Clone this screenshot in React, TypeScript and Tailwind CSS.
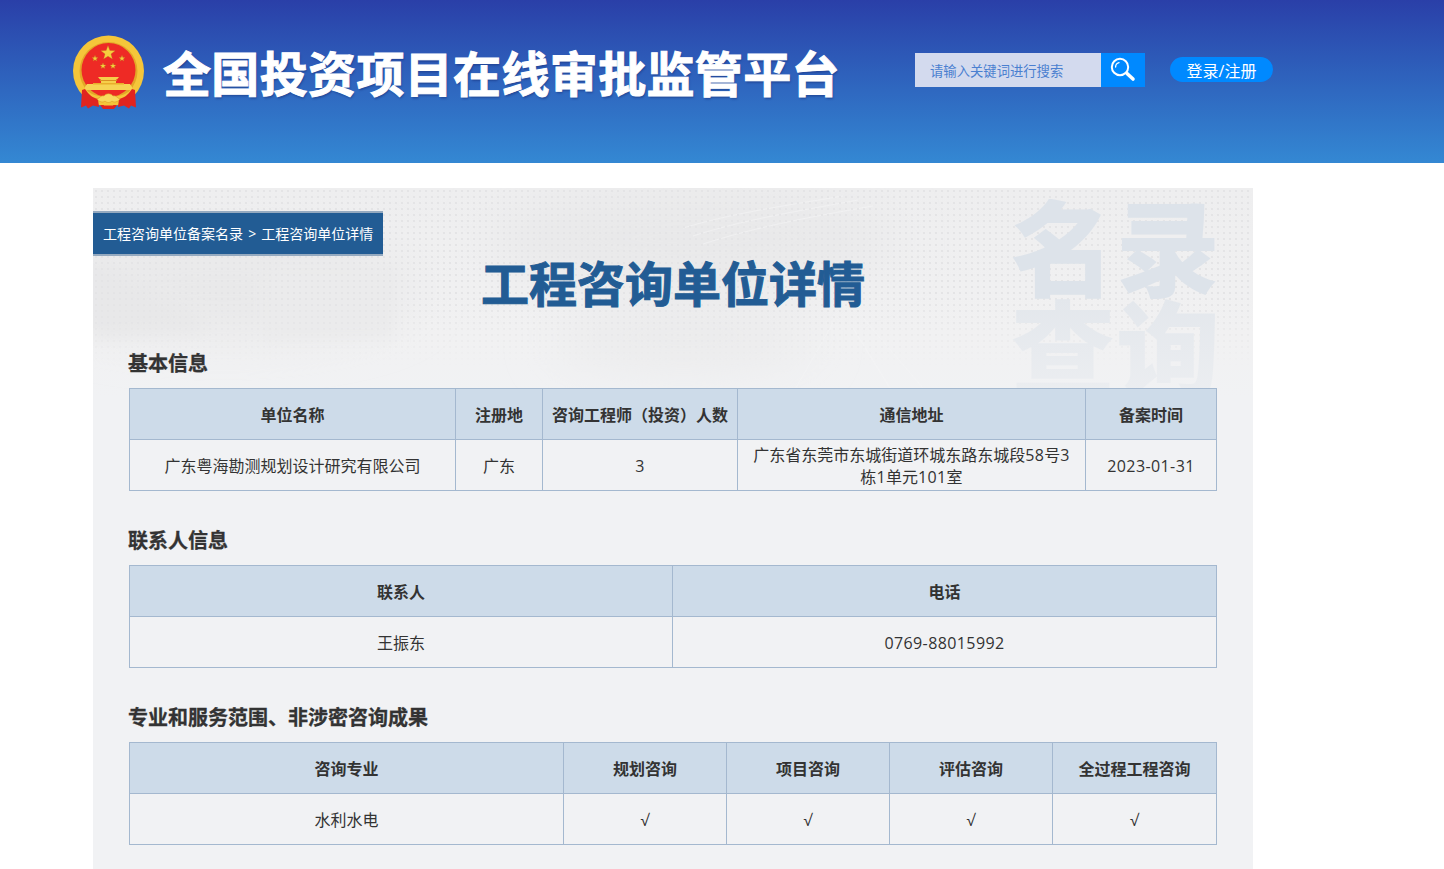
import React from 'react';

const FONT = 'font-["Open_Sans","Noto_Sans_CJK_SC",sans-serif]';

function Star({ x, y, r }: { x: number; y: number; r: number }) {
  const pts: string[] = [];
  for (let i = 0; i < 10; i++) {
    const a = -Math.PI / 2 + (i * Math.PI) / 5;
    const d = i % 2 === 0 ? r : r * 0.42;
    pts.push(`${x + d * Math.cos(a)},${y + d * Math.sin(a)}`);
  }
  return <polygon points={pts.join(' ')} fill="#f6cf3e" stroke="#b9781c" strokeWidth="0.3" />;
}

function Emblem() {
  return (
    <svg width="73" height="77" viewBox="0 0 73 77" className="shrink-0">
      {/* ring */}
      <circle cx="36.5" cy="37" r="35.5" fill="#f5c63a" />
      <circle cx="36.5" cy="37" r="29" fill="#e3a727" />
      <circle cx="36.5" cy="36" r="27" fill="#ee2a25" />
      <Star x={36} y={19} r={7.5} />
      <Star x={23} y={24.5} r={3.2} />
      <Star x={50} y={24.5} r={3.2} />
      <Star x={31} y={32} r={3.2} />
      <Star x={41} y={32} r={3.2} />
      {/* gate */}
      <path d="M26 43h21l-2 2.5h-1V49h-15v-3.500h-1z" fill="#f6cf4a" />
      <path d="M28 46h17v1H28z" fill="#d98f22" />
      <path d="M15 50h43l2 3v3H13v-3z" fill="#f6d354" />
      <path d="M21 49h31v1.500H21z" fill="#e9ad2a" />
      {/* ribbon and wheat at the bottom */}
      <path d="M12 55c6 5 14 8 24.500 8S55 60 61 55l2 4c-6 7-16 10-26.500 10S16 66 10 59z" fill="#f5c63a" />
      <path d="M10 56l3-1c4 6 8 9 13 10l1 8-6-1.500-5 3-2-3-5 2z" fill="#e1241f" />
      <path d="M63 56l-3-1c-4 6-8 9-13 10l-1 8 6-1.500 5 3 2-3 5 2z" fill="#e1241f" />
      <path d="M25 65c3-1 4-4 7-3 2-3 7-3 9 0 3-1 4 2 7 3-2 3-6 4-8 2-2 2-5 2-7 0-2 2-6 1-8-2z" fill="#f8d95e" stroke="#d99a22" strokeWidth="0.6" />
      <path d="M28 71h17l-3 4H31z" fill="#e1241f" />
      <path d="M30 69h13l-2 2.500h-9z" fill="#f5c63a" />
    </svg>
  );
}

function SearchIcon() {
  return (
    <svg width="26" height="26" viewBox="0 0 26 26" fill="none">
      <circle cx="10" cy="10" r="8.200" stroke="white" strokeWidth="2" />
      <path d="M5.600 10a4.500 4.500 0 0 1 3.400-4.300" stroke="white" strokeWidth="1.300" strokeLinecap="round" />
      <path d="M17 16.500l6 5.500" stroke="white" strokeWidth="3.600" strokeLinecap="round" />
    </svg>
  );
}

function PanelArt() {
  return (
    <svg width="1160" height="210" viewBox="0 0 1160 210" className="absolute left-0 top-0" fill="none">
      <defs>
        <filter id="soft" x="-20%" y="-20%" width="140%" height="140%">
          <feGaussianBlur stdDeviation="8" />
        </filter>
        <filter id="softer" x="-20%" y="-20%" width="140%" height="140%">
          <feGaussianBlur stdDeviation="24" />
        </filter>
      </defs>
      <g filter="url(#softer)">
        <ellipse cx="130" cy="100" rx="190" ry="50" fill="#e9e9ea" />
        <ellipse cx="600" cy="50" rx="200" ry="50" fill="#e9e9ea" />
        <ellipse cx="590" cy="150" rx="130" ry="30" fill="#ebebec" />
      </g>
      <g filter="url(#soft)">
        <path d="M0 70L120 140L0 150z" fill="#e8e8e9" />
        <path d="M170 80h130v70H170z" fill="#ebebec" />
      </g>
      <path d="M0 75L62 128L0 140z" fill="#e8e8e9" opacity="0.6" />
      <g stroke="#f5f5f6" strokeWidth="1" opacity="0.6">
        <path d="M590 40C640 25 690 18 750 8" />
        <path d="M600 48C650 32 700 24 765 12" />
        <path d="M610 56C660 40 710 30 780 18" />
        <path d="M770 130L830 200" />
        <path d="M760 140L800 205" />
        <path d="M700 205L740 135" />
      </g>
    </svg>
  );
}

function Header() {
  return (
    <header className="h-[163px] bg-gradient-to-b from-[#2a3fa8] to-[#3488d3] flex items-start">
      <div className="ml-[72px] mt-[34px] w-[73px]">
        <Emblem />
      </div>
      <h1 className="ml-[18px] mt-[40px] w-[680px] text-[48px] leading-[68px] font-bold tracking-[0.35px] text-white whitespace-nowrap [-webkit-text-stroke:1px_white] [text-shadow:1px_2px_2px_rgba(20,40,110,0.45)]">
        全国投资项目在线审批监管平台
      </h1>
      <div className="ml-[72px] mt-[53px] flex h-[34px] w-[230px]">
        <div className="w-[186px] bg-[#d3daee] pl-[15px] text-[13.33px] leading-[36px] text-[#4a7fd0]">请输入关键词进行搜索</div>
        <div className="w-[44px] bg-[#0089ff] flex items-center justify-center">
          <SearchIcon />
        </div>
      </div>
      <div className="ml-[25px] mt-[57px] w-[103px] h-[25px] rounded-full bg-[#0089ff] text-white text-[16px] leading-[28px] text-center">
        登录/注册
      </div>
    </header>
  );
}

function Breadcrumb() {
  return (
    <div className="relative inline-block h-[45px] w-[290px] bg-[#225c94] border-y-2 border-[#95aac0] pl-[10px] text-[14px] leading-[42px] text-white whitespace-nowrap">
      工程咨询单位备案名录 <span className="mx-[1.5px]">&gt;</span> 工程咨询单位详情
    </div>
  );
}

function Latin({ children }: { children: React.ReactNode }) {
  return <span className="tracking-[0.4px]">{children}</span>;
}

function Section({ title, widths, head, row }: { title: string; widths: number[]; head: string[]; row: React.ReactNode[] }) {
  return (
    <section className="relative">
      <h2 className="text-[20px] leading-[30px] font-bold text-[#333] mb-[9px] [-webkit-text-stroke:0.3px_#333]">{title}</h2>
      <table className="w-[1087px] ml-px table-fixed border-collapse text-[16px] text-[#333] text-center">
        <colgroup>
          {widths.map((w, i) => (
            <col key={i} style={{ width: w }} />
          ))}
        </colgroup>
        <thead>
          <tr className="h-[51px] bg-[#cddbe9]">
            {head.map((h) => (
              <th key={h} className="border border-[#a4b8cf] font-bold px-1 pt-[2px] whitespace-nowrap">{h}</th>
            ))}
          </tr>
        </thead>
        <tbody>
          <tr className="h-[51px]">
            {row.map((c, i) => (
              <td key={i} className="border border-[#a4b8cf] px-3 pt-[2px] leading-[22px]">{c}</td>
            ))}
          </tr>
        </tbody>
      </table>
    </section>
  );
}

export default function App() {
  return (
    <div className={`min-h-screen bg-white overflow-hidden ${FONT}`}>
      <Header />
      <main className="relative ml-[93px] mt-[25px] w-[1160px] bg-[#f1f2f4] pb-[40px] overflow-hidden">
        {/* background art at the top of the panel */}
        <div className="absolute inset-x-0 top-0 h-[210px] bg-[linear-gradient(180deg,#eeeeef_0%,#f1f1f2_70%,#f1f2f4_100%)]" />
        <PanelArt />
        <div className="absolute inset-x-0 top-0 h-[210px] bg-[radial-gradient(#e3e3e5_0.7px,transparent_0.9px)] bg-[length:6px_6px] [mask-image:linear-gradient(180deg,black_50%,transparent_85%)]" />
        <div className="absolute left-[918px] top-[11px] h-[189px] w-[220px] overflow-hidden text-[104px] leading-[100px] font-black tracking-[1px]">
          <div className="text-[#dde3ea]">名录</div>
          <div className="bg-[linear-gradient(180deg,#e3e7ec_0%,#eceef1_100%)] bg-clip-text text-transparent">查询</div>
        </div>

        <div className="relative">
          <div className="pt-[23px]">
            <Breadcrumb />
          </div>
          <div className="mt-[-6px] h-[68px] text-center text-[48px] leading-[68px] font-bold text-[#225c94] [-webkit-text-stroke:1px_#225c94]">
            工程咨询单位详情
          </div>
          <div className="pl-[35px] mt-[31px] flex flex-col gap-[35px]">
            <Section
              title="基本信息"
              widths={[326, 87, 195, 348, 131]}
              head={['单位名称', '注册地', '咨询工程师（投资）人数', '通信地址', '备案时间']}
              row={[
                '广东粤海勘测规划设计研究有限公司',
                '广东',
                <Latin>3</Latin>,
                <>广东省东莞市东城街道环城东路东城段<Latin>58</Latin>号<Latin>3</Latin>栋<Latin>1</Latin>单元<Latin>101</Latin>室</>,
                <Latin>2023-01-31</Latin>,
              ]}
            />
            <Section title="联系人信息" widths={[543, 544]} head={['联系人', '电话']} row={['王振东', <Latin>0769-88015992</Latin>]} />
            <Section
              title="专业和服务范围、非涉密咨询成果"
              widths={[434, 163, 163, 163, 164]}
              head={['咨询专业', '规划咨询', '项目咨询', '评估咨询', '全过程工程咨询']}
              row={['水利水电', '√', '√', '√', '√']}
            />
          </div>
        </div>
      </main>
    </div>
  );
}
